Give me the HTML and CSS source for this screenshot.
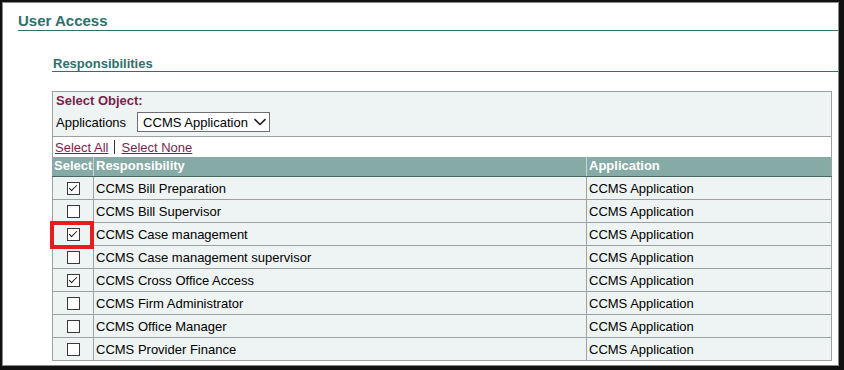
FILE: index.html
```html
<!DOCTYPE html>
<html lang="en">
<head>
  <meta charset="UTF-8" />
  <title>User Access</title>
  <link rel="stylesheet" href="styles.css">
</head>
<body>
  <div class="window">
    <div class="page">

      <h1 class="page-title">User Access</h1>
      <h2 class="section-title">Responsibilities</h2>

      <table class="resp-table">
        <colgroup>
          <col class="col-sel">
          <col class="col-resp">
          <col>
        </colgroup>
        <tr class="object-row">
          <td colspan="3">
            <div class="object-label">Select Object:</div>
            <div class="object-pick">
              <label for="obj">Applications</label>
              <span class="select-wrap">
                <select id="obj" class="obj-select">
                  <option>CCMS Application</option>
                </select>
                <svg class="chevron" width="14" height="8" viewBox="0 0 14 8"><path d="M1.5 1.2 L7 6.5 L12.5 1.2" fill="none" stroke="#1a1a1a" stroke-width="1.6"/></svg>
              </span>
            </div>
          </td>
        </tr>
        <tr class="links-row">
          <td colspan="3">
            <a href="#">Select All</a><span class="sep"></span><a href="#">Select None</a>
          </td>
        </tr>
        <tr class="head-row">
          <th>Select</th>
          <th>Responsibility</th>
          <th>Application</th>
        </tr>
        <tr>
          <td class="sel"><input type="checkbox" class="cb" checked></td>
          <td>CCMS Bill Preparation</td>
          <td>CCMS Application</td>
        </tr>
        <tr>
          <td class="sel"><input type="checkbox" class="cb"></td>
          <td>CCMS Bill Supervisor</td>
          <td>CCMS Application</td>
        </tr>
        <tr>
          <td class="sel"><input type="checkbox" class="cb" checked><span class="highlight"></span></td>
          <td>CCMS Case management</td>
          <td>CCMS Application</td>
        </tr>
        <tr>
          <td class="sel"><input type="checkbox" class="cb"></td>
          <td>CCMS Case management supervisor</td>
          <td>CCMS Application</td>
        </tr>
        <tr>
          <td class="sel"><input type="checkbox" class="cb" checked></td>
          <td>CCMS Cross Office Access</td>
          <td>CCMS Application</td>
        </tr>
        <tr>
          <td class="sel"><input type="checkbox" class="cb"></td>
          <td>CCMS Firm Administrator</td>
          <td>CCMS Application</td>
        </tr>
        <tr>
          <td class="sel"><input type="checkbox" class="cb"></td>
          <td>CCMS Office Manager</td>
          <td>CCMS Application</td>
        </tr>
        <tr>
          <td class="sel"><input type="checkbox" class="cb"></td>
          <td>CCMS Provider Finance</td>
          <td>CCMS Application</td>
        </tr>
      </table>

    </div>
  </div>
</body>
</html>
```

FILE: styles.css
```css
body {
  margin: 0;
  font-family: 'Liberation Sans', Arial, sans-serif;
  background: #ffffff;
  color: #000000;
}
.window {
  width: 844px;
  height: 370px;
  box-sizing: border-box;
  border-style: solid;
  border-color: #111111;
  border-width: 2px 5px 4px 2px;
}
.page {
  height: 100%;
  box-sizing: border-box;
  border: 1px solid #8a8a8a;
  overflow: hidden;
}
.page-title {
  margin: 9px 0 0 15px;
  font-size: 15px;
  line-height: 18px;
  font-weight: bold;
  color: #2d706c;
  border-bottom: 1px solid #2d706c;
}
.section-title {
  margin: 25px 0 0 49px;
  padding-left: 1px;
  font-size: 13px;
  line-height: 15px;
  font-weight: bold;
  color: #2d706c;
  border-bottom: 1px solid #2d706c;
}
.resp-table {
  margin: 19px 0 0 49px;
  width: 780px;
  table-layout: fixed;
  border-collapse: collapse;
  border: 1px solid #a0a0a0;
  font-size: 13px;
  background: #eef4f3;
}
.col-sel {
  width: 41px;
}
.col-resp {
  width: 493px;
}
.resp-table td {
  padding: 2px 0 0 2px;
  line-height: 20px;
  border: 1px solid #a0a0a0;
  white-space: nowrap;
}
.object-row td {
  padding: 1px 0 4px 3px;
  line-height: 15px;
}
.object-label {
  font-weight: bold;
  color: #7a1f4c;
}
.object-pick {
  display: flex;
  align-items: center;
  gap: 11px;
  margin-top: 4px;
}
.select-wrap {
  position: relative;
  display: inline-block;
}
.obj-select {
  appearance: none;
  -webkit-appearance: none;
  width: 133px;
  height: 20px;
  margin: 0;
  padding: 0 0 0 5px;
  border: 1px solid #6f6f6f;
  border-radius: 0;
  background: #ffffff;
  font-family: inherit;
  font-size: 13px;
  color: #000000;
}
.chevron {
  position: absolute;
  right: 3px;
  top: 6px;
  pointer-events: none;
}
.links-row td {
  background: #ffffff;
  padding: 3px 0 2px 2px;
  line-height: 15px;
  border-bottom: none;
}
.links-row a {
  color: #7a1f4c;
  text-decoration: underline;
}
.sep {
  display: inline-block;
  width: 1px;
  height: 14px;
  margin: 0 6px;
  background: #333333;
  vertical-align: -2px;
}
.head-row th {
  background: #86aaa5;
  color: #ffffff;
  font-weight: bold;
  text-align: left;
  padding: 1px 0 3px 2px;
  line-height: 15px;
  border-left: 1px solid #c9d3d1;
  border-bottom: 1px solid #4e6663;
}
.head-row th:first-child {
  padding-left: 1px;
  border-left: 1px solid #a0a0a0;
}
.resp-table td.sel {
  position: relative;
  padding: 0;
  vertical-align: middle;
}
.cb {
  appearance: none;
  -webkit-appearance: none;
  position: relative;
  display: block;
  width: 13px;
  height: 13px;
  margin: 0 auto;
  border: 1px solid #3a3a3a;
  background: #ffffff;
}
.cb:checked::after {
  content: "";
  position: absolute;
  left: 3px;
  top: 0px;
  width: 3px;
  height: 7px;
  border-right: 1.5px solid #1a1a1a;
  border-bottom: 1.5px solid #1a1a1a;
  transform: rotate(45deg);
}
.highlight {
  position: absolute;
  left: -3px;
  top: -2px;
  width: 44px;
  height: 28px;
  box-sizing: border-box;
  border: 4px solid #ea1b1f;
}
```
